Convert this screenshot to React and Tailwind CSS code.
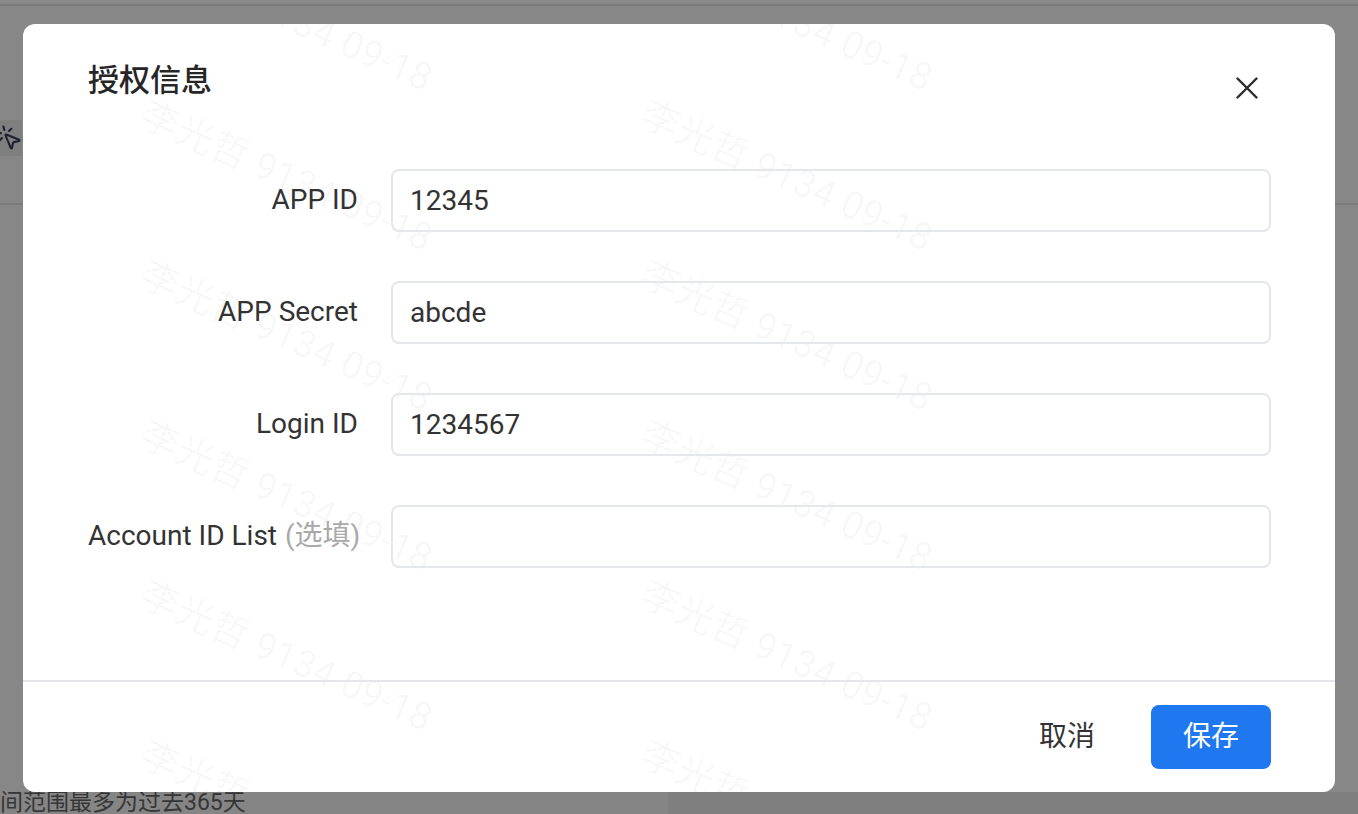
import React from "react";
import { MousePointerClick } from "lucide-react";

const fields = [
  { label: "APP ID", value: "12345" },
  { label: "APP Secret", value: "abcde" },
  { label: "Login ID", value: "1234567" },
  { label: "Account ID List", hint: "(选填)", value: "" },
];

const marks = [];
[-89, 71, 231, 391, 551, 711].forEach((top) => {
  [128, 628].forEach((left) => marks.push({ top, left }));
});

function Watermark() {
  return (
    <div className="pointer-events-none absolute inset-0 overflow-hidden">
      {marks.map((m, i) => (
        <span
          key={i}
          className="absolute origin-top-left rotate-[24deg] whitespace-nowrap text-[38px] leading-none text-black/[0.03]"
          style={{ top: m.top, left: m.left }}
        >
          李光哲 9134 09-18
        </span>
      ))}
    </div>
  );
}

function App() {
  return (
    <div className="relative h-[814px] w-[1358px] overflow-hidden bg-[#878787] font-['Roboto','Noto_Sans_CJK_SC',sans-serif]">
      {/* dimmed page behind */}
      <div className="flex h-full flex-col">
        <div className="h-[6px] bg-[#8a8a8a] border-b-2 border-[#7a7a7a]" />
        <div className="mt-[114px] flex h-[36px] w-[22px] items-center overflow-hidden bg-[#7f7f7f]">
          <MousePointerClick size={28} strokeWidth={1.8} className="-ml-[5px] shrink-0 text-[#1e2230]" />
        </div>
        <div className="mt-[47px] h-[2px] bg-[#7b7b7b]" />
        <div className="flex-1" />
        <div className="flex h-[22px]">
          <div className="w-[668px] whitespace-nowrap bg-[#858585] text-[23px] leading-[22px] text-[#363636]">
            间范围最多为过去365天
          </div>
          <div className="flex-1 bg-[#7f7f7f]" />
        </div>
      </div>

      {/* modal */}
      <div className="absolute left-[23px] top-[24px] flex h-[768px] w-[1312px] flex-col overflow-hidden rounded-[12px] bg-white">
        <Watermark />
        <div className="relative flex items-start justify-between pl-[65px] pr-[77px] pt-[36px]">
          <h2 className="text-[31px] font-medium leading-[42px] text-[#262626]">授权信息</h2>
          <button className="mt-[17px] flex h-[22px] w-[22px] items-center justify-center text-[#2b2b2b]">
            <svg width="22" height="22" viewBox="0 0 22 22" fill="none" stroke="currentColor" strokeWidth="2.4" strokeLinecap="round">
              <path d="M1.5 1.5 20.5 20.5M20.5 1.5 1.5 20.5" />
            </svg>
          </button>
        </div>

        <div className="relative mt-[67px] flex flex-1 flex-col gap-[50px] pl-[65px] pr-[64px]">
          {fields.map((f) => (
            <div key={f.label} className="flex h-[62px] items-center gap-[33px]">
              <label className="w-[270px] whitespace-nowrap text-right text-[28px] text-[#333]">
                {f.label}
                {f.hint && <span className="ml-[8px] text-[#a9a9a9]">{f.hint}</span>}
              </label>
              <input
                readOnly
                value={f.value}
                className="h-[63px] flex-1 rounded-[8px] border-2 border-[#e4e7ec] bg-transparent px-[17px] text-[28px] text-[#333] outline-none"
              />
            </div>
          ))}
        </div>

        <div className="relative h-[2px] bg-[#e4e6eb]" />
        <div className="relative flex justify-end gap-[24px] px-[64px] pb-[23px] pt-[23px]">
          <button className="h-[64px] w-[120px] text-[28px] text-[#333]">取消</button>
          <button className="h-[64px] w-[120px] rounded-[8px] bg-[#1f78f0] text-[28px] text-white">保存</button>
        </div>
      </div>
    </div>
  );
}

export default App;
